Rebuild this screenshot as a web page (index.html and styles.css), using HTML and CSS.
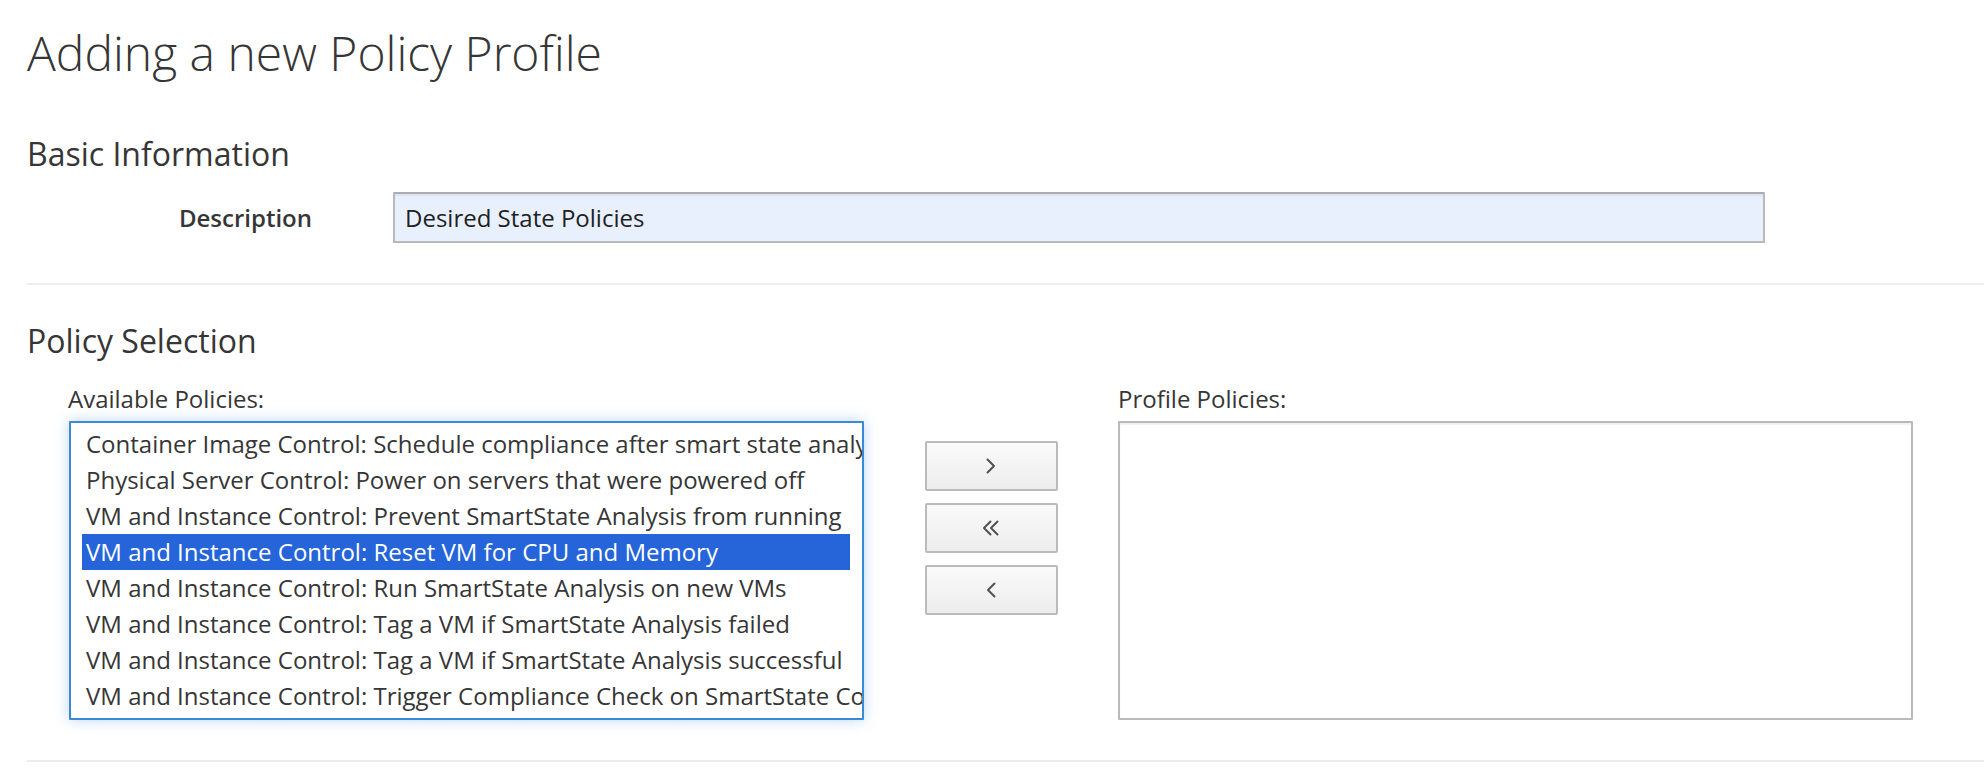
FILE: index.html
```html
<!DOCTYPE html>
<html lang="en">
<head>
<meta charset="utf-8">
<title>Adding a new Policy Profile</title>
<link rel="stylesheet" href="styles.css">
</head>
<body>
<div class="page">
  <h1 class="page-title">Adding a new Policy Profile</h1>

  <section class="section">
    <h3 class="section-title section-title--first">Basic Information</h3>
    <div class="form-row">
      <label class="form-label" for="desc">Description</label>
      <input id="desc" class="form-input" type="text" value="Desired State Policies">
    </div>
  </section>

  <hr class="divider">

  <section class="section">
    <h3 class="section-title">Policy Selection</h3>
    <div class="picker">
      <div class="picker-col">
        <div class="picker-label">Available Policies:</div>
        <div class="listbox listbox--focused">
          <div class="option">Container Image Control: Schedule compliance after smart state analysis</div>
          <div class="option">Physical Server Control: Power on servers that were powered off</div>
          <div class="option">VM and Instance Control: Prevent SmartState Analysis from running</div>
          <div class="option option--selected">VM and Instance Control: Reset VM for CPU and Memory</div>
          <div class="option">VM and Instance Control: Run SmartState Analysis on new VMs</div>
          <div class="option">VM and Instance Control: Tag a VM if SmartState Analysis failed</div>
          <div class="option">VM and Instance Control: Tag a VM if SmartState Analysis successful</div>
          <div class="option">VM and Instance Control: Trigger Compliance Check on SmartState Complete</div>
        </div>
      </div>

      <div class="picker-buttons">
        <button class="move-btn" type="button" title="Move selected policies into this profile">
          <svg class="move-icon" width="20" height="16" viewBox="0 0 20 16" aria-hidden="true">
            <polyline points="6.5,1.5 13,8 6.5,14.5"/>
          </svg>
        </button>
        <button class="move-btn" type="button" title="Remove all policies from this profile">
          <svg class="move-icon" width="20" height="16" viewBox="0 0 20 16" aria-hidden="true">
            <polyline points="9.5,1.5 3,8 9.5,14.5"/>
            <polyline points="16.5,1.5 10,8 16.5,14.5"/>
          </svg>
        </button>
        <button class="move-btn" type="button" title="Remove selected policies from this profile">
          <svg class="move-icon" width="20" height="16" viewBox="0 0 20 16" aria-hidden="true">
            <polyline points="13.5,1.5 7,8 13.5,14.5"/>
          </svg>
        </button>
      </div>

      <div class="picker-col">
        <div class="picker-label picker-label--right">Profile Policies:</div>
        <div class="listbox"></div>
      </div>
    </div>
  </section>

  <hr class="divider">
</div>
</body>
</html>
```

FILE: styles.css
```css
html, body {
  margin: 0;
  padding: 0;
  background: #ffffff;
}

body {
  font-family: "Open Sans", "Liberation Sans", sans-serif;
  color: #363636;
  font-size: 24px;
}

.page {
  padding-left: 27px;
}

.page-title {
  margin: 26px 0 0;
  font-size: 48px;
  line-height: 53px;
  font-weight: 300;
  color: #363636;
}

.section-title {
  margin: 38px 0 0;
  font-size: 32px;
  line-height: 35px;
  font-weight: 400;
  color: #363636;
}

.section-title--first {
  margin-top: 57px;
}

.form-row {
  display: flex;
  align-items: center;
  margin-top: 21px;
}

.form-label {
  width: 285px;
  text-align: right;
  font-weight: 600;
  font-size: 24px;
  line-height: 51px;
  color: #363636;
}

.form-input {
  margin-left: 81px;
  width: 1372px;
  height: 51px;
  box-sizing: border-box;
  padding: 0 10px;
  border: 2px solid #b9b9b9;
  border-top-color: #adadad;
  border-radius: 1px;
  background: #e8f0fe;
  box-shadow: inset 0 2px 2px rgba(3, 3, 3, 0.06);
  font-family: "Open Sans", "Liberation Sans", sans-serif;
  font-size: 24px;
  line-height: 47px;
  color: #222222;
  outline: none;
}

.divider {
  margin: 40px 0 0;
  border: 0;
  height: 2px;
  background: #ededed;
}

.picker {
  display: grid;
  grid-template-columns: 796px 133px 795px;
  justify-content: space-between;
  width: 1845px;
  margin: 24px 0 0 41px;
}

.picker-col {
  display: flex;
  flex-direction: column;
}

.picker-label {
  font-size: 24px;
  line-height: 33px;
  color: #363636;
}

.listbox {
  margin-top: 6px;
  height: 299px;
  box-sizing: border-box;
  border: 2px solid #bababa;
  border-radius: 1px;
  background: #ffffff;
  box-shadow: inset 0 2px 2px rgba(3, 3, 3, 0.06);
  padding: 3px 0 4px 11px;
  overflow: hidden;
}

.listbox--focused {
  margin-left: 1px;
  border-color: #3b8ad6;
  box-shadow: 0 0 14px rgba(59, 138, 214, 0.35);
}

.option {
  width: 768px;
  box-sizing: border-box;
  padding: 0 4px;
  height: 36px;
  line-height: 36px;
  font-size: 24px;
  white-space: nowrap;
  color: #363636;
}

.option--selected {
  background: #2564d9;
  color: #ffffff;
}

.picker-buttons {
  display: flex;
  flex-direction: column;
  gap: 12px;
  padding-top: 59px;
}

.move-btn {
  display: flex;
  align-items: center;
  justify-content: center;
  width: 133px;
  height: 50px;
  box-sizing: border-box;
  padding: 0;
  border: 2px solid #bbbbbb;
  border-radius: 2px;
  background: linear-gradient(to bottom, #fafafa 0%, #ededed 100%);
  cursor: pointer;
}

.move-icon {
  display: block;
  fill: none;
  stroke: #4d5258;
  stroke-width: 2;
  stroke-linecap: round;
  stroke-linejoin: round;
}
```
